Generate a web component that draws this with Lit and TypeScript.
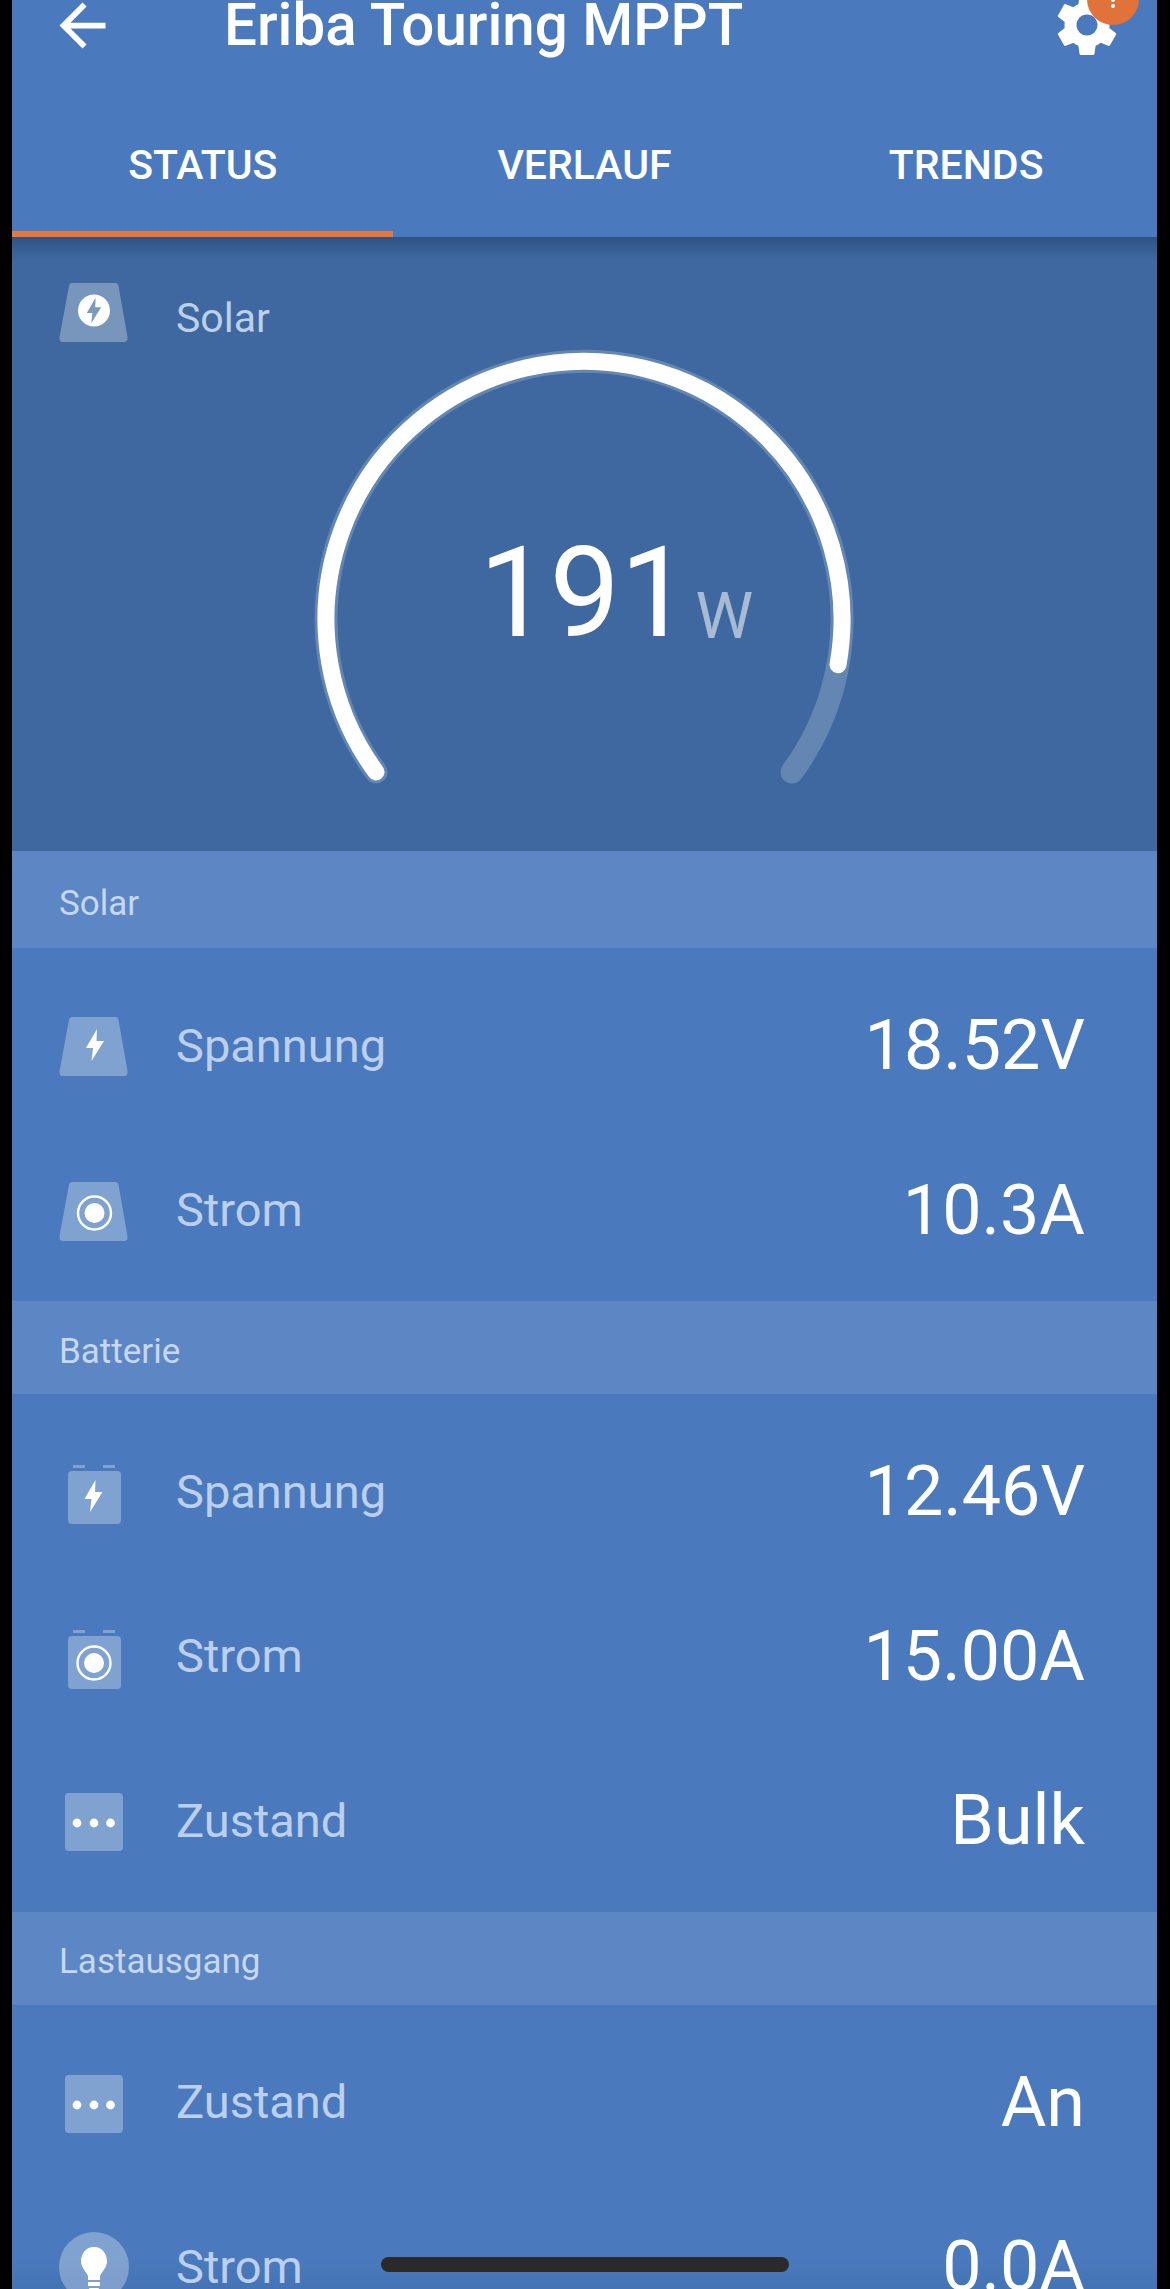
import { LitElement, html, css, svg } from "lit";
import { customElement } from "lit/decorators.js";

const bolt = (cx: number, cy: number, s: number) =>
  svg`<path transform="translate(${cx} ${cy}) scale(${s})" fill="#fff" d="M2 -16 L-9 3 L-2 3 L-3.5 16 L9 -4 L1.5 -4 Z"/>`;
const target = svg`<circle cx="35" cy="35" r="16.5" fill="none" stroke="#fff" stroke-width="2.4"/><circle cx="35" cy="35" r="10" fill="#fff"/>`;
const trap = svg`<path fill="rgba(255,255,255,.3)" d="M13 1 H56 Q59 1 59.5 4 L68.5 55 Q69 60 65 60 H4 Q0 60 .5 55 L10 4 Q10.5 1 13 1 Z"/>`;
const batt = svg`<g transform="translate(0 4)" fill="rgba(255,255,255,.3)"><rect x="14" y="0" width="12" height="3"/><rect x="44" y="0" width="12" height="3"/><rect x="9" y="6" width="53" height="53" rx="4"/></g>`;
const square = svg`<rect x="6" y="7" width="58" height="58" rx="4" fill="rgba(255,255,255,.3)"/>`;
const dots = svg`<circle cx="18" cy="37" r="4.4" fill="#fff"/><circle cx="35" cy="37" r="4.4" fill="#fff"/><circle cx="51.5" cy="37" r="4.4" fill="#fff"/>`;

const icons: Record<string, unknown> = {
  trapBolt: html`<svg class="ic" viewBox="0 -1 70 62">${trap}${bolt(36, 29, 1)}</svg>`,
  trapTarget: html`<svg class="ic" viewBox="0 -1 70 62">${trap}<g transform="translate(0.5 -3)">${target}</g></svg>`,
  battBolt: html`<svg class="ic" viewBox="0 0 70 62">${batt}${bolt(34.5, 35, 1)}</svg>`,
  battTarget: html`<svg class="ic" viewBox="0 0 70 62">${batt}<g transform="translate(0 2)">${target}</g></svg>`,
  dots: html`<svg class="ic" viewBox="0 0 70 70">${square}${dots}</svg>`,
  bulb: html`<svg class="ic" viewBox="0 0 70 70">
    <circle cx="35" cy="35" r="35" fill="rgba(255,255,255,.3)"/>
    <path fill="#fff" d="M35 15 C24 15 22 26 22 29 C22 36 27 39 29 44 L29 48 H41 L41 44 C43 39 48 36 48 29 C48 26 46 15 35 15 Z"/>
    <rect x="29" y="50" width="12" height="4" fill="#fff"/>
    <path fill="#fff" d="M30 56 H40 Q38 61 35 61 Q32 61 30 56 Z"/>
  </svg>`,
};

interface Row { icon: string; label: string; value: string; }
const groups: { title: string; rows: Row[] }[] = [
  { title: "Solar", rows: [
    { icon: "trapBolt", label: "Spannung", value: "18.52V" },
    { icon: "trapTarget", label: "Strom", value: "10.3A" },
  ] },
  { title: "Batterie", rows: [
    { icon: "battBolt", label: "Spannung", value: "12.46V" },
    { icon: "battTarget", label: "Strom", value: "15.00A" },
    { icon: "dots", label: "Zustand", value: "Bulk" },
  ] },
  { title: "Lastausgang", rows: [
    { icon: "dots", label: "Zustand", value: "An" },
    { icon: "bulb", label: "Strom", value: "0.0A" },
  ] },
];

@customElement("app-root")
export class AppRoot extends LitElement {
  static styles = css`
    :host { display: block; width: 1170px; height: 2289px; overflow: hidden; background: #000; position: relative; font-family: Roboto, "Liberation Sans", sans-serif; }
    .page { margin: 0 13px 0 12px; background: linear-gradient(to bottom, #4a7abd calc(100% - 30px), #4574b5 100%); height: 2289px; overflow: hidden; }
    header { background: #4a7abd; position: relative; z-index: 1; }
    .bar { height: 135px; margin-top: -43px; display: flex; align-items: center; position: relative; }
    .back { width: 69px; height: 69px; margin-left: 36px; margin-top: 2px; fill: #fff; flex: none; }
    .title { color: #fff; font-size: 58.3px; font-weight: 500; margin-left: 107px; white-space: nowrap; }
    .gear { width: 72px; height: 72px; fill: #fff; position: absolute; left: 1039px; top: 32px; }
    .badge { position: absolute; left: 1087px; top: -27px; width: 52px; height: 52px; border-radius: 50%; background: #e1733a; z-index: 3; }
    .badge i { position: absolute; left: 24px; background: #fff; width: 4px; border-radius: 2px; }
    .badge i.a { top: 25px; height: 4px; }
    .badge i.b { top: 31px; height: 4px; width: 4px; border-radius: 50%; }
    .tabs { display: grid; grid-template-columns: repeat(3, 1fr); height: 145px; }
    .tab { display: flex; align-items: center; justify-content: center; color: #fff; font-size: 41px; font-weight: 500; border-bottom: 6px solid transparent; padding-top: 6px; box-sizing: border-box; }
    .tab.on { border-image: linear-gradient(to right, #e8773c 380px, transparent 380px) 1; }
    .hero { background: linear-gradient(to bottom, #2f5285 0, #3e689f 22px); height: 614px; box-sizing: border-box; padding-top: 46px; position: relative; }
    .hero-head { display: flex; align-items: center; height: 60px; padding-left: 47px; color: #bcd0ea; font-size: 41px; }
    .hero-head span { margin-left: 47px; padding-top: 9px; }
    .gauge { display: block; width: 1145px; height: 508px; }
    .num { position: absolute; left: 467px; top: 294px; color: #fff; font-size: 125.5px; font-weight: 400; line-height: 125px; }
    .unit { position: absolute; left: 683.5px; top: 347px; color: rgba(255,255,255,.55); font-size: 65px; font-weight: 400; line-height: 65px; }
    .sec { background: #5c87c4; height: 93px; display: flex; align-items: center; padding: 7px 0 0 47px; color: #c6d7ef; font-size: 35px; box-sizing: border-box; }
    .sec.first { height: 97px; }
    .group { padding: 16px 0 8px; }
    .row { height: 164.5px; display: flex; align-items: center; padding: 0 72px 0 47px; }
    .ic { width: 70px; height: auto; flex: none; display: block; overflow: visible; }
    .lab { margin: 0 0 2px 47px; color: #bcd0ee; font-size: 47px; flex: 1; }
    .val { margin-bottom: 2px; color: #fff; font-size: 70px; }
    .home { position: absolute; left: 381px; top: 2257px; width: 408px; height: 15px; border-radius: 8px; background: #2a2a2a; z-index: 2; }
  `;

  render() {
    return html`
      <div class="page">
        <header>
          <div class="bar">
            <svg class="back" viewBox="0 0 24 24"><path d="M20 11H7.83l5.59-5.59L12 4l-8 8 8 8 1.41-1.41L7.83 13H20v-2z"/></svg>
            <div class="title">Eriba Touring MPPT</div>
            <svg class="gear" viewBox="0 0 24 24"><path d="M19.43 12.98c.04-.32.07-.64.07-.98s-.03-.66-.07-.98l2.11-1.65c.19-.15.24-.42.12-.64l-2-3.46c-.12-.22-.39-.3-.61-.22l-2.49 1c-.52-.4-1.08-.73-1.69-.98l-.38-2.65C14.46 2.18 14.25 2 14 2h-4c-.25 0-.46.18-.49.42l-.38 2.65c-.61.25-1.17.59-1.69.98l-2.49-1c-.23-.09-.49 0-.61.22l-2 3.46c-.13.22-.07.49.12.64l2.11 1.65c-.04.32-.07.65-.07.98s.03.66.07.98l-2.11 1.65c-.19.15-.24.42-.12.64l2 3.46c.12.22.39.3.61.22l2.49-1c.52.4 1.08.73 1.69.98l.38 2.65c.03.24.24.42.49.42h4c.25 0 .46-.18.49-.42l.38-2.65c.61-.25 1.17-.59 1.69-.98l2.49 1c.23.09.49 0 .61-.22l2-3.46c.12-.22.07-.49-.12-.64l-2.11-1.65zM12 15.5c-1.93 0-3.5-1.57-3.5-3.5s1.57-3.5 3.5-3.5 3.5 1.57 3.5 3.5-1.57 3.5-3.5 3.5z"/></svg>
          </div>
          <div class="tabs">
            <div class="tab on">STATUS</div>
            <div class="tab">VERLAUF</div>
            <div class="tab">TRENDS</div>
          </div>
        </header>
        <section class="hero">
          <div class="hero-head">
            ${html`<svg class="ic" viewBox="0 0 70 62">${trap}<circle cx="35" cy="28.5" r="16" fill="#fff"/><path fill="#7a9abf" transform="translate(35 28.5) scale(.8)" d="M2 -16 L-9 3 L-2 3 L-3.5 16 L9 -4 L1.5 -4 Z"/></svg>`}
            <span>Solar</span>
          </div>
          <svg class="gauge" viewBox="0 0 1145 508">
            <path d="M364 429 A258 258 0 1 1 780 429" fill="none" stroke="rgba(255,255,255,.2)" stroke-width="23" stroke-linecap="round"/>
            <path d="M364 429 A258 258 0 1 1 826 321.7" fill="none" stroke="#fff" stroke-width="17" stroke-linecap="round"/>
          </svg>
          <div class="num">191</div>
          <div class="unit">W</div>
        </section>
        ${groups.map((g, i) => html`
          <div class="sec ${i === 0 ? "first" : ""}">${g.title}</div>
          <div class="group">
            ${g.rows.map((r) => html`
              <div class="row">
                ${icons[r.icon]}
                <div class="lab">${r.label}</div>
                <div class="val">${r.value}</div>
              </div>`)}
          </div>`)}
      </div>
      <div class="badge"><i class="a"></i><i class="b"></i></div>
      <div class="home"></div>
    `;
  }
}
